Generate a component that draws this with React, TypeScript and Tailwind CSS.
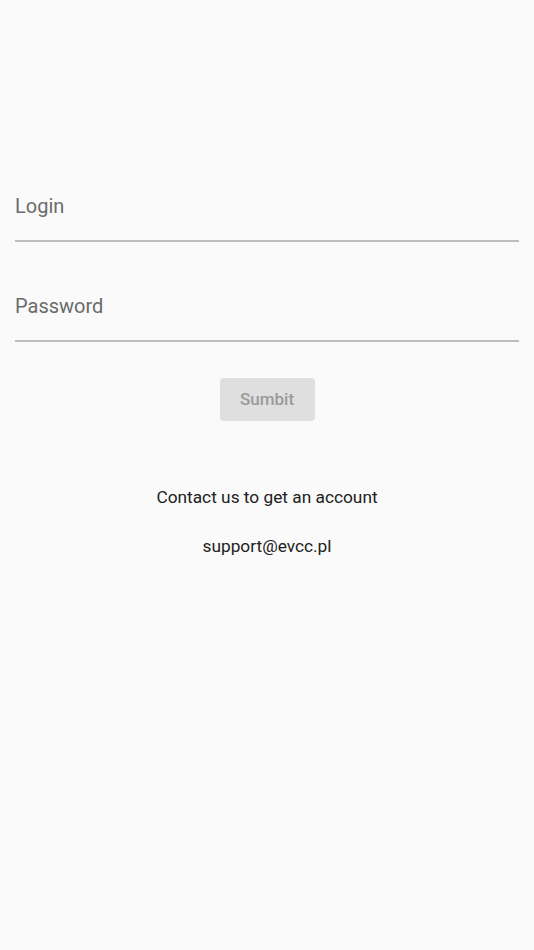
import React, { useState } from "react";

export default function App() {
  const [login, setLogin] = useState("");
  const [password, setPassword] = useState("");

  return (
    <div
      className="min-h-[950px] w-full bg-[#fafafa] px-[15px]"
      style={{ fontFamily: "Roboto, 'Noto Sans', sans-serif" }}
    >
      <div className="pt-[186px]">
        <div className="border-b-2 border-[#bdbdbd] h-[56px] flex items-start">
          <input
            value={login}
            onChange={(e) => setLogin(e.target.value)}
            placeholder="Login"
            className="w-full bg-transparent outline-none text-[20px] leading-[40px] text-[#616161] placeholder:text-[#6b6b6b]"
          />
        </div>
        <div className="mt-[42px] border-b-2 border-[#bdbdbd] h-[58px] flex items-start pt-[2px]">
          <input
            type="password"
            value={password}
            onChange={(e) => setPassword(e.target.value)}
            placeholder="Password"
            className="w-full bg-transparent outline-none text-[20px] leading-[40px] text-[#616161] placeholder:text-[#6b6b6b]"
          />
        </div>
        <div className="flex justify-center mt-[36px]">
          <button
            disabled
            className="w-[95px] h-[43px] rounded-[4px] bg-[#dfdfdf] text-[17px] font-medium text-[#9a9a9a]"
          >
            Sumbit
          </button>
        </div>
        <p className="mt-[64px] text-center text-[17.3px] text-[#212121] leading-[24px]">
          Contact us to get an account
        </p>
        <p className="mt-[25px] text-center text-[17.3px] text-[#212121] leading-[24px]">
          support@evcc.pl
        </p>
      </div>
    </div>
  );
}
